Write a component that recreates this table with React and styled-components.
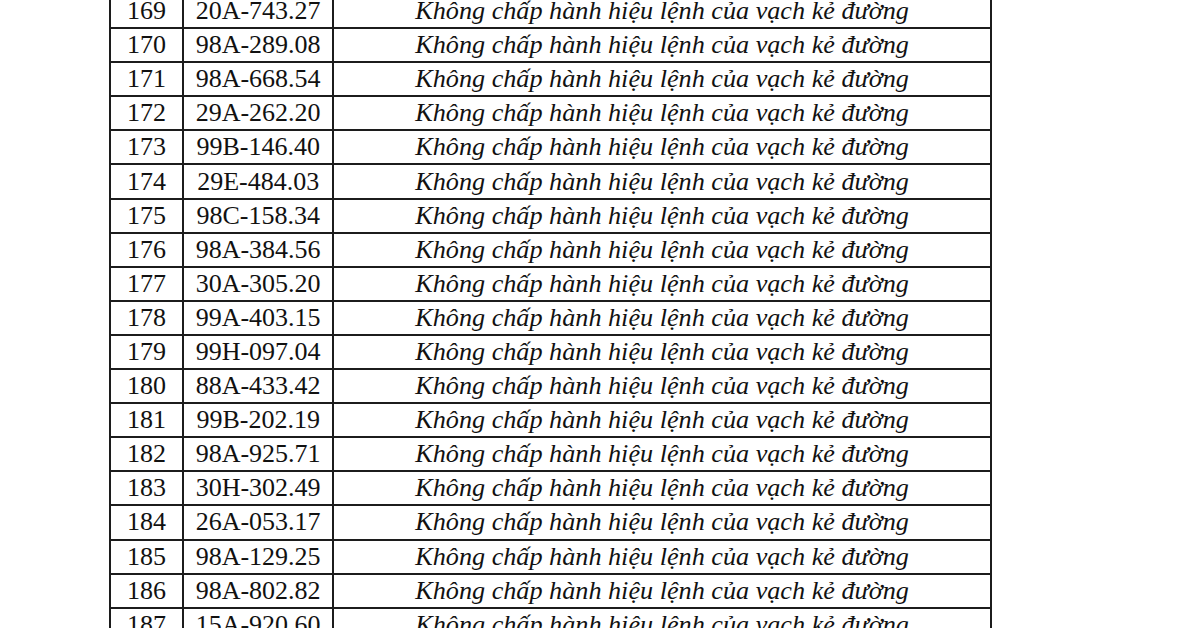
import React from "react";
import styled, { createGlobalStyle } from "styled-components";

const Global = createGlobalStyle`
  html, body { margin: 0; padding: 0; background: #ffffff; }
  body { width: 1200px; height: 628px; overflow: hidden; }
`;

const Page = styled.div`
  width: 1200px;
  height: 628px;
  overflow: hidden;
  background: #fff;
`;

const Table = styled.table`
  border-collapse: collapse;
  table-layout: fixed;
  margin-top: -7px;
  margin-left: 109px;
  width: 883px;
  font-family: "Liberation Serif", "Times New Roman", serif;
  color: #111;
`;

const Row = styled.tr`
  height: 34.1px;
`;

const Cell = styled.td`
  border: 2px solid #1c1c1c;
  padding: 0;
  text-align: center;
  vertical-align: middle;
  font-size: ${(p) => (p.$italic ? "26.2px" : "26px")};
  line-height: 30px;
  font-style: ${(p) => (p.$italic ? "italic" : "normal")};
  white-space: nowrap;
  overflow: hidden;
`;

const rows = [
  ["169", "20A-743.27"],
  ["170", "98A-289.08"],
  ["171", "98A-668.54"],
  ["172", "29A-262.20"],
  ["173", "99B-146.40"],
  ["174", "29E-484.03"],
  ["175", "98C-158.34"],
  ["176", "98A-384.56"],
  ["177", "30A-305.20"],
  ["178", "99A-403.15"],
  ["179", "99H-097.04"],
  ["180", "88A-433.42"],
  ["181", "99B-202.19"],
  ["182", "98A-925.71"],
  ["183", "30H-302.49"],
  ["184", "26A-053.17"],
  ["185", "98A-129.25"],
  ["186", "98A-802.82"],
  ["187", "15A-920.60"],
];

const VIOLATION = "Không chấp hành hiệu lệnh của vạch kẻ đường";

export default function App() {
  return (
    <Page>
      <Global />
      <Table>
        <colgroup>
          <col style={{ width: "73px" }} />
          <col style={{ width: "150px" }} />
          <col style={{ width: "657px" }} />
        </colgroup>
        <tbody>
          {rows.map(([n, plate]) => (
            <Row key={n}>
              <Cell>{n}</Cell>
              <Cell>{plate}</Cell>
              <Cell $italic>{VIOLATION}</Cell>
            </Row>
          ))}
        </tbody>
      </Table>
    </Page>
  );
}
